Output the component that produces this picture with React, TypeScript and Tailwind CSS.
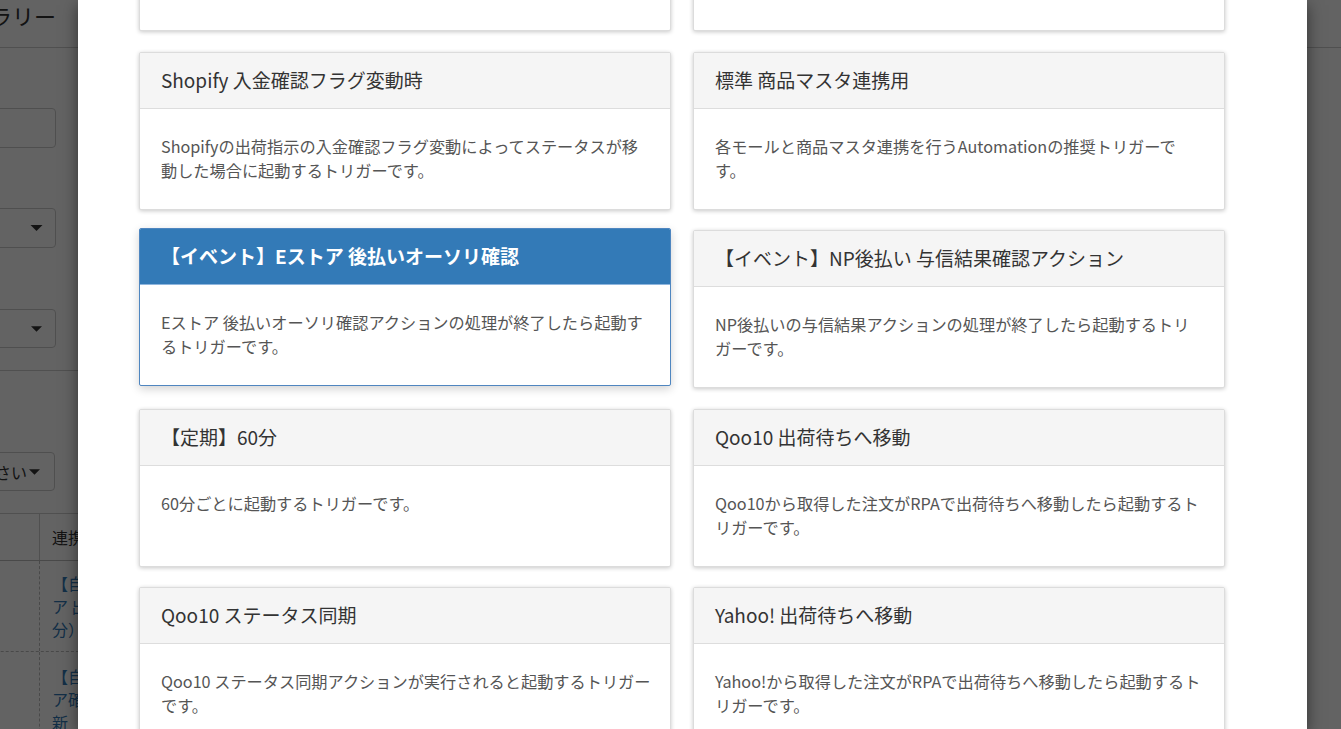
import React from "react";

type Card = { title: string; desc: string; active?: boolean };

const cards: Card[] = [
  { title: "Shopify 出荷完了時", desc: "Shopifyの出荷完了時に起動します。" },
  { title: "標準 受注取込用", desc: "受注取込を行う推奨トリガーです。" },
  {
    title: "Shopify 入金確認フラグ変動時",
    desc: "Shopifyの出荷指示の入金確認フラグ変動によってステータスが移動した場合に起動するトリガーです。",
  },
  {
    title: "標準 商品マスタ連携用",
    desc: "各モールと商品マスタ連携を行うAutomationの推奨トリガーです。",
  },
  {
    title: "【イベント】Eストア 後払いオーソリ確認",
    desc: "Eストア 後払いオーソリ確認アクションの処理が終了したら起動するトリガーです。",
    active: true,
  },
  {
    title: "【イベント】NP後払い 与信結果確認アクション",
    desc: "NP後払いの与信結果アクションの処理が終了したら起動するトリガ\u2060ーです。",
  },
  { title: "【定期】60分", desc: "60分ごとに起動するトリガーです。" },
  {
    title: "Qoo10 出荷待ちへ移動",
    desc: "Qoo10から取得した注文がRPAで出荷待ちへ移動したら起動するトリガーです。",
  },
  {
    title: "Qoo10 ステータス同期",
    desc: "Qoo10 ステータス同期アクションが実行されると起動するトリガーです。",
  },
  {
    title: "Yahoo! 出荷待ちへ移動",
    desc: "Yahoo!から取得した注文がRPAで出荷待ちへ移動したら起動するトリガーです。",
  },
];

function TriggerCard({ card }: { card: Card }) {
  if (card.active) {
    return (
      <div className="h-[158px] -translate-y-[2px] overflow-hidden rounded-[2px] border border-[#4f86c0] bg-white shadow-[0_3px_10px_rgba(0,0,0,0.18)]">
        <div className="flex h-[56px] items-center whitespace-nowrap border-b border-[#8fb6de] bg-[#337ab7] pl-[21px] pr-[18px] text-[19px] font-bold text-white">
          {card.title}
        </div>
        <div className="h-[100px] pl-[21px] pr-[18px] pt-[25px] text-[16.2px] leading-[24px] text-[#555] [line-break:strict]">
          {card.desc}
        </div>
      </div>
    );
  }
  return (
    <div className="h-[158px] overflow-hidden rounded-[2px] border border-[#dcdcdc] bg-white shadow-[0_1px_4px_rgba(0,0,0,0.22)]">
      <div className="flex h-[56px] items-center whitespace-nowrap border-b border-[#dddddd] bg-[#f5f5f5] pl-[21px] pr-[18px] text-[19px] text-[#333]">
        {card.title}
      </div>
      <div className="h-[100px] pl-[21px] pr-[18px] pt-[25px] text-[16.2px] leading-[24px] text-[#555] [line-break:strict]">
        {card.desc}
      </div>
    </div>
  );
}

function Caret({ w = 13, h = 6 }: { w?: number; h?: number }) {
  return (
    <svg width={w} height={h} viewBox="0 0 12 6" className="shrink-0">
      <path d="M0 0 L12 0 L6 6 Z" fill="#333" />
    </svg>
  );
}

function BackgroundPage() {
  return (
    <div className="flex h-full flex-col bg-white">
      <div className="h-[48px] shrink-0 border-b border-[#cfcfcf]">
        <div className="flex h-[30px] w-[56px] justify-end overflow-hidden whitespace-nowrap text-[22px] leading-[30px] text-[#333]">
          自動化ギャラリー
        </div>
      </div>
      <div className="-ml-[200px] flex w-[600px] flex-col">
        <div className="mt-[60px] h-[40px] w-[256px] rounded-[4px] border border-[#ccc] bg-white" />
        <div className="mt-[60px] flex h-[40px] w-[256px] items-center justify-end rounded-[4px] border border-[#ccc] bg-white pr-[12px]">
          <Caret w={13} h={6} />
        </div>
        <div className="mt-[61px] flex h-[39px] w-[256px] items-center justify-end rounded-[4px] border border-[#ccc] bg-white pr-[13px]">
          <Caret w={11} h={6} />
        </div>
        <div className="mt-[22px] h-px w-full bg-[#cfcfcf]" />
        <div className="mt-[81px] flex h-[39px] w-[255px] items-center justify-end gap-[2px] rounded-[4px] border border-[#ccc] bg-white pr-[14px] text-[16px] text-[#333]">
          <span className="whitespace-nowrap">選択してください</span>
          <Caret w={11} h={6} />
        </div>
        <div className="mt-[22px] flex flex-col border-t border-[#cfcfcf]">
          <div className="flex h-[47px] border-b border-[#bbb]">
            <div className="w-[240px] border-r border-[#cfcfcf]" />
            <div className="flex items-center pl-[12px] text-[16px] text-[#333]">連携</div>
          </div>
          <div className="flex h-[91px] border-b border-dashed border-[#bbb]">
            <div className="w-[240px] border-r border-dashed border-[#bbb]" />
            <div className="w-[300px] pl-[12px] pt-[11px] text-[16px] leading-[23px] text-[#337ab7]">
              【自動】Eスト<br />ア 出荷待ち<br />分）
            </div>
          </div>
          <div className="flex h-[91px] border-b border-dashed border-[#bbb]">
            <div className="w-[240px] border-r border-dashed border-[#bbb]" />
            <div className="w-[300px] pl-[12px] pt-[13px] text-[16px] leading-[23px] text-[#337ab7]">
              【自動】Eスト<br />ア確認<br />新
            </div>
          </div>
        </div>
      </div>
    </div>
  );
}

export default function App() {
  return (
    <div
      className="relative h-[729px] w-[1341px] overflow-hidden bg-white"
      style={{ fontFamily: '"Noto Sans CJK JP", "Noto Sans", sans-serif' }}
    >
      <BackgroundPage />
      <div className="absolute inset-0 bg-black/[0.61]" />
      <div className="absolute inset-0 overflow-hidden">
        <div className="ml-[78px] flex h-full w-[1229px] flex-col bg-white pl-[61px] pr-[82px] shadow-[0_5px_15px_rgba(0,0,0,0.5)]">
          <div className="-mt-[127px] grid shrink-0 grid-cols-2 gap-x-[22px] gap-y-[20.5px]">
            {cards.map((c, i) => (
              <TriggerCard key={i} card={c} />
            ))}
          </div>
        </div>
      </div>
    </div>
  );
}
